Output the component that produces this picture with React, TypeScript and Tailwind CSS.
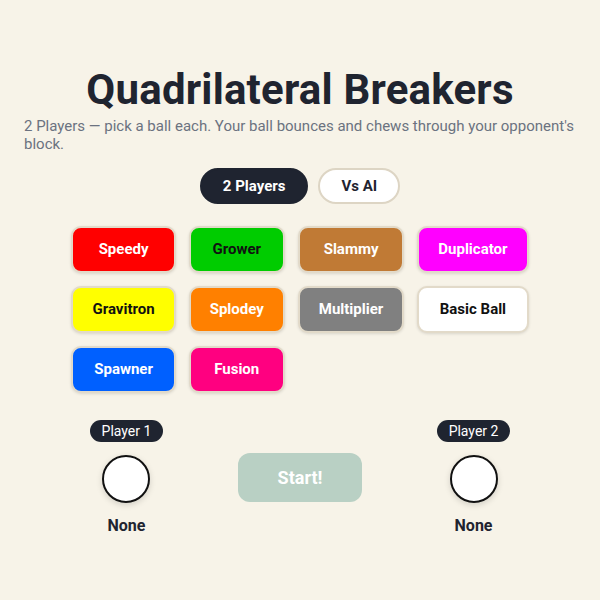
import React, { useState } from 'react';

type Ball = { name: string; bg: string; text: string };

const BALLS: Ball[] = [
  { name: 'Speedy', bg: 'bg-[#ff0000]', text: 'text-white' },
  { name: 'Grower', bg: 'bg-[#00cc00]', text: 'text-[#111111]' },
  { name: 'Slammy', bg: 'bg-[#c07a35]', text: 'text-white' },
  { name: 'Duplicator', bg: 'bg-[#ff00ff]', text: 'text-white' },
  { name: 'Gravitron', bg: 'bg-[#ffff00]', text: 'text-[#111111]' },
  { name: 'Splodey', bg: 'bg-[#ff8000]', text: 'text-white' },
  { name: 'Multiplier', bg: 'bg-[#808080]', text: 'text-white' },
  { name: 'Basic Ball', bg: 'bg-white', text: 'text-[#111111]' },
  { name: 'Spawner', bg: 'bg-[#0060ff]', text: 'text-white' },
  { name: 'Fusion', bg: 'bg-[#ff0080]', text: 'text-white' },
];

const PlayerSlot: React.FC<{ label: string }> = ({ label }) => (
  <div className="flex w-[110px] flex-col items-center">
    <span className="rounded-full bg-[#1f2430] px-3 py-[2px] text-[14px] leading-[18px] text-white">{label}</span>
    <div className="mt-[13px] h-[48px] w-[48px] rounded-full border-2 border-[#111] bg-white shadow-[0_2px_6px_rgba(0,0,0,0.15)]" />
    <span className="mt-[13px] text-[16px] font-bold leading-5 text-[#1f2430]">None</span>
  </div>
);

export default function App() {
  const [mode, setMode] = useState<'2p' | 'ai'>('2p');

  return (
    <div className="min-h-[600px] bg-[#f7f3e8] px-6 pt-[64px] font-['Roboto',sans-serif]">
      <h1 className="text-center text-[42px] font-bold leading-[52px] tracking-[0.2px] text-[#1f2430]">Quadrilateral Breakers</h1>
      <p className="mt-[1px] text-[15px] leading-[18px] text-[#6b7280]">
        2 Players — pick a ball each. Your ball bounces and chews through your opponent's block.
      </p>

      <div className="mt-[15px] flex justify-center gap-[10px]">
        <button
          type="button"
          onClick={() => setMode('2p')}
          className={`h-[36px] rounded-full border-2 px-[21px] text-[15px] font-bold ${mode === '2p' ? 'border-[#1f2430] bg-[#1f2430] text-white' : 'border-[#ddd5c4] bg-white text-[#1f2430]'}`}
        >
          2 Players
        </button>
        <button
          type="button"
          onClick={() => setMode('ai')}
          className={`h-[36px] rounded-full border-2 px-[21px] text-[15px] font-bold ${mode === 'ai' ? 'border-[#1f2430] bg-[#1f2430] text-white' : 'border-[#ddd5c4] bg-white text-[#1f2430]'}`}
        >
          Vs AI
        </button>
      </div>

      <div className="mx-auto mt-[22px] w-fit">
        <div className="grid grid-cols-[repeat(4,auto)] gap-x-[13px] gap-y-[13px]">
          {BALLS.map((b) => (
            <button
              key={b.name}
              type="button"
              className={`h-[47px] rounded-[10px] border-2 border-[#e2dac9] px-[19px] text-[15px] font-bold shadow-[0_1px_3px_rgba(0,0,0,0.12)] ${b.bg} ${b.text}`}
            >
              {b.name}
            </button>
          ))}
        </div>

        <div className="mt-[27px] flex items-center justify-between">
          <PlayerSlot label="Player 1" />
          <button
            type="button"
            disabled
            className="mt-[-2px] h-[49px] w-[124px] rounded-[12px] bg-[#b9d0c4] text-[18px] font-bold text-white"
          >
            Start!
          </button>
          <PlayerSlot label="Player 2" />
        </div>
      </div>
    </div>
  );
}
